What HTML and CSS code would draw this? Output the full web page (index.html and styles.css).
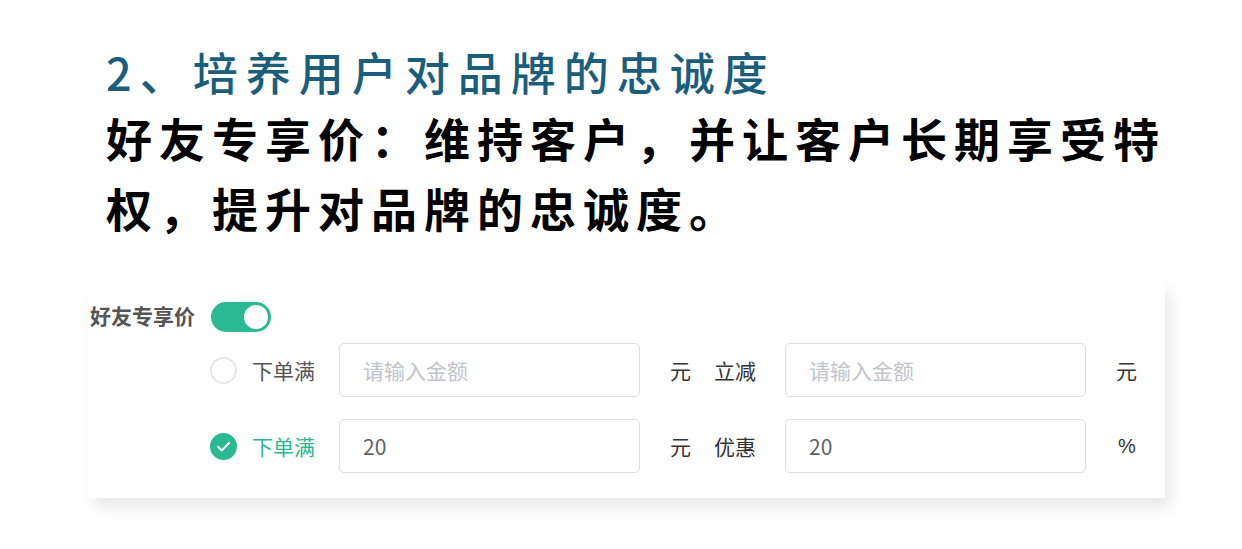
FILE: index.html
```html
<!DOCTYPE html>
<html lang="zh-CN">
<head>
    <meta charset="UTF-8">
    <meta name="viewport" content="width=device-width, initial-scale=1.0">
    <title>好友专享价</title>
    <link rel="stylesheet" href="styles.css">
</head>
<body>
    <div class="page">
        <div class="intro">
            <h1 class="title">2、培养用户对品牌的忠诚度</h1>
            <p class="desc">好友专享价：维持客户，并让客户长期享受特权，提升对品牌的忠诚度。</p>
        </div>

        <div class="card">
            <div class="switch-row">
                <span class="switch-label">好友专享价</span>
                <span class="switch is-on"><span class="switch-knob"></span></span>
            </div>

            <div class="rule-row">
                <span class="radio"></span>
                <span class="rule-label">下单满</span>
                <input class="field" type="text" placeholder="请输入金额">
                <span class="unit">元</span>
                <span class="rule-label second">立减</span>
                <input class="field" type="text" placeholder="请输入金额">
                <span class="unit">元</span>
            </div>

            <div class="rule-row">
                <span class="radio is-checked">
                    <svg viewBox="0 0 27 27" width="27" height="27">
                        <circle cx="13.5" cy="13.5" r="13.5" fill="#2bb993"/>
                        <path d="M8 13.8 L11.8 17.4 L19 10" fill="none" stroke="#fff" stroke-width="2" stroke-linecap="round" stroke-linejoin="round"/>
                    </svg>
                </span>
                <span class="rule-label active">下单满</span>
                <input class="field" type="text" value="20">
                <span class="unit">元</span>
                <span class="rule-label second">优惠</span>
                <input class="field" type="text" value="20">
                <span class="unit percent">%</span>
            </div>
        </div>
    </div>
</body>
</html>
```

FILE: styles.css
```css
body {
    margin: 0;
    background-color: #fff;
    font-family: "Noto Sans CJK SC", "Noto Sans", sans-serif;
}

.page {
    padding: 42px 0 51px 88px;
}

.intro {
    padding-left: 18px;
    width: 1080px;
}

.title {
    margin: 0;
    font-size: 45px;
    font-weight: 500;
    line-height: 60px;
    letter-spacing: 8px;
    color: #1b5e7b;
}

.desc {
    margin: 0;
    font-size: 46px;
    font-weight: 700;
    line-height: 70px;
    letter-spacing: 7px;
    color: #000;
}

.card {
    box-sizing: border-box;
    width: 1077px;
    height: 216px;
    margin-top: 40px;
    padding: 20px 0 0 2px;
    background-color: #fff;
    box-shadow: 6px 10px 14px rgba(0, 0, 0, 0.09);
}

.switch-row {
    display: flex;
    align-items: center;
    height: 30px;
}

.switch-label {
    font-size: 21px;
    font-weight: 700;
    color: #555;
    margin-right: 16px;
    margin-top: -4px;
}

.switch {
    position: relative;
    width: 60px;
    height: 30px;
    border-radius: 15px;
    background-color: #dcdfe6;
}

.switch.is-on {
    background-color: #2bb993;
}

.switch-knob {
    position: absolute;
    top: 3px;
    right: 3px;
    width: 24px;
    height: 24px;
    border-radius: 50%;
    background-color: #fff;
}

.rule-row {
    display: flex;
    align-items: center;
    height: 54px;
    margin-top: 11px;
    padding-left: 120px;
    font-size: 21px;
}

.rule-row + .rule-row {
    margin-top: 22px;
}

.radio {
    box-sizing: border-box;
    width: 27px;
    height: 27px;
    border: 2px solid #e4e6eb;
    border-radius: 50%;
    margin-right: 15px;
}

.radio.is-checked {
    border: none;
}

.radio svg {
    display: block;
}

.rule-label {
    width: 63px;
    margin-right: 24px;
    color: #555;
}

.rule-label.active {
    color: #2bb993;
}

.rule-label.second {
    width: 42px;
    margin: 0 29px 0 23px;
    color: #333;
}

.field {
    box-sizing: border-box;
    width: 301px;
    height: 54px;
    padding: 0 23px;
    border: 1px solid #dcdfe6;
    border-radius: 5px;
    font-family: "Noto Sans CJK SC", "Noto Sans", sans-serif;
    font-size: 21px;
    color: #606266;
    outline: none;
}

.field::placeholder {
    color: #c0c4cc;
}

.unit {
    margin-left: 30px;
    color: #333;
}

.unit.percent {
    margin-left: 32px;
    font-family: "Liberation Sans", Arial, sans-serif;
    font-size: 20px;
}
```
